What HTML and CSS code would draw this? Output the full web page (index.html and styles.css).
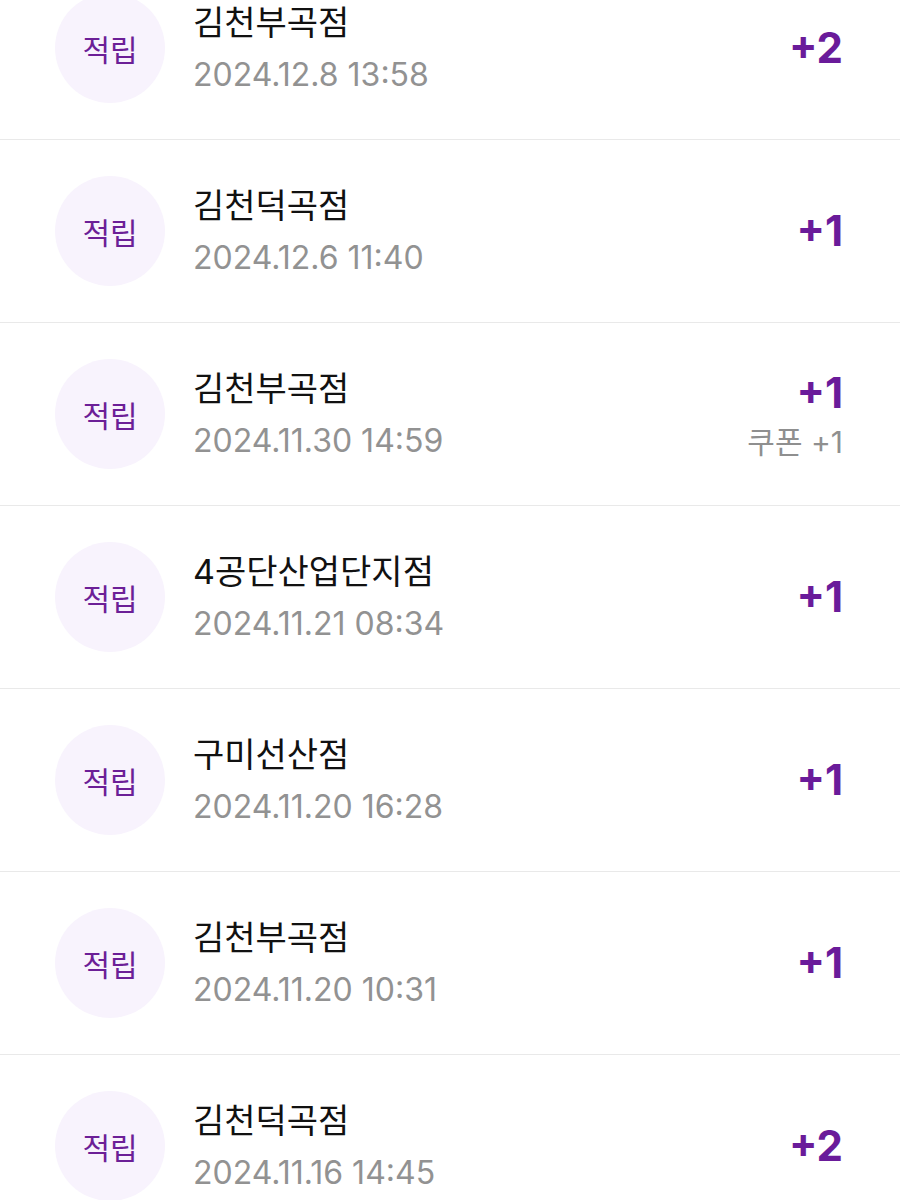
FILE: index.html
```html
<!DOCTYPE html>
<html lang="ko">
  <head>
    <meta charset="UTF-8" />
    <meta name="viewport" content="width=device-width, initial-scale=1.0" />
    <title>적립 내역</title>
    <link rel="stylesheet" href="styles.css">
  </head>
  <body>
    <ul class="history">
      <li class="entry">
        <div class="badge">적립</div>
        <div class="info">
          <div class="store">김천부곡점</div>
          <div class="date">2024.12.8 13:58</div>
        </div>
        <div class="points">
          <div class="amount">+2</div>
        </div>
      </li>
      <li class="entry">
        <div class="badge">적립</div>
        <div class="info">
          <div class="store">김천덕곡점</div>
          <div class="date">2024.12.6 11:40</div>
        </div>
        <div class="points">
          <div class="amount">+1</div>
        </div>
      </li>
      <li class="entry">
        <div class="badge">적립</div>
        <div class="info">
          <div class="store">김천부곡점</div>
          <div class="date">2024.11.30 14:59</div>
        </div>
        <div class="points">
          <div class="amount">+1</div>
          <div class="coupon">쿠폰 +1</div>
        </div>
      </li>
      <li class="entry">
        <div class="badge">적립</div>
        <div class="info">
          <div class="store">4공단산업단지점</div>
          <div class="date">2024.11.21 08:34</div>
        </div>
        <div class="points">
          <div class="amount">+1</div>
        </div>
      </li>
      <li class="entry">
        <div class="badge">적립</div>
        <div class="info">
          <div class="store">구미선산점</div>
          <div class="date">2024.11.20 16:28</div>
        </div>
        <div class="points">
          <div class="amount">+1</div>
        </div>
      </li>
      <li class="entry">
        <div class="badge">적립</div>
        <div class="info">
          <div class="store">김천부곡점</div>
          <div class="date">2024.11.20 10:31</div>
        </div>
        <div class="points">
          <div class="amount">+1</div>
        </div>
      </li>
      <li class="entry">
        <div class="badge">적립</div>
        <div class="info">
          <div class="store">김천덕곡점</div>
          <div class="date">2024.11.16 14:45</div>
        </div>
        <div class="points">
          <div class="amount">+2</div>
        </div>
      </li>
    </ul>
  </body>
</html>
```

FILE: styles.css
```css
body {
  font-family: Inter, "Noto Sans CJK KR", sans-serif;
  background-color: #ffffff;
  margin: 0;
  padding: 0;
  overflow: hidden;
}

.history {
  list-style: none;
  margin: -43px 0 0 0;
  padding: 0;
}

.entry {
  display: flex;
  align-items: center;
  height: 182px;
  padding: 0 57px 0 55px;
  border-bottom: 1px solid #e9e9e9;
}

.badge {
  width: 110px;
  height: 110px;
  border-radius: 50%;
  background-color: #f8f3fd;
  color: #6c1f97;
  font-size: 30px;
  display: flex;
  align-items: center;
  justify-content: center;
  flex-shrink: 0;
}

.info {
  flex: 1;
  margin-left: 28px;
}

.store {
  font-size: 34px;
  color: #111111;
  line-height: 44px;
}

.date {
  font-size: 32px;
  color: #929292;
  line-height: 40px;
  margin-top: 10px;
}

.points {
  text-align: right;
}

.amount {
  font-size: 42px;
  font-weight: 700;
  color: #6a1b9a;
  line-height: 50px;
}

.coupon {
  font-size: 30px;
  color: #8f8f8f;
  line-height: 36px;
  margin-top: 6px;
}
```
